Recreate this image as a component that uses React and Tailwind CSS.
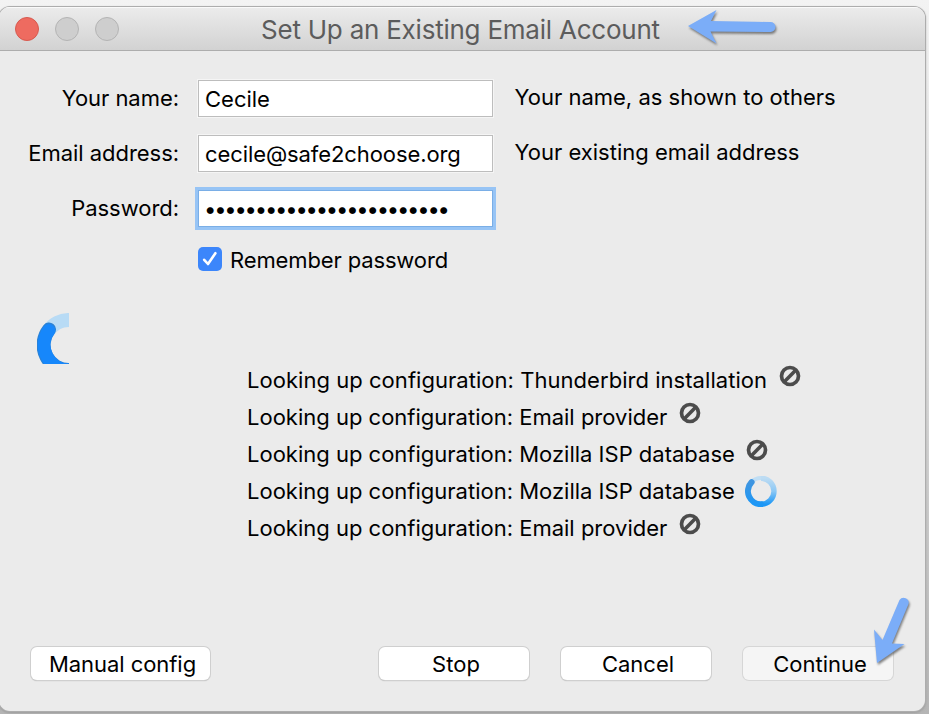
import React from "react";

function Blocked() {
  return (
    <svg width="22" height="22" viewBox="0 0 22 22" className="shrink-0 fill-none stroke-[#4c4c4c]">
      <circle cx="11" cy="11" r="8.5" strokeWidth="3.7" />
      <path d="M5.6 16.4 16.4 5.6" strokeWidth="3.6" />
    </svg>
  );
}

function SmallSpinner() {
  return (
    <svg width="32" height="31" viewBox="0 0 32 31" className="shrink-0 fill-none">
      <defs>
        <linearGradient id="leftArc" x1="0" y1="0" x2="0" y2="1">
          <stop offset="0" stopColor="#3f95e0" />
          <stop offset="1" stopColor="#1c97f6" />
        </linearGradient>
        <linearGradient id="rightArc" x1="0" y1="0" x2="0" y2="1">
          <stop offset="0" stopColor="#bddcf3" />
          <stop offset="0.5" stopColor="#8cc8f5" />
          <stop offset="1" stopColor="#1c97f6" />
        </linearGradient>
      </defs>
      <path d="M6.5 6 A13.2 13.2 0 0 1 16 2" stroke="#c0def4" strokeWidth="4" />
      <path d="M16 2.200 A13 13 0 0 1 16 28.200" stroke="url(#rightArc)" strokeWidth="5.4" />
      <path d="M6.6 6.2 A13 13 0 0 0 16.2 28.2" stroke="url(#leftArc)" strokeWidth="6" strokeLinecap="round" />
    </svg>
  );
}

function Lookup({ source, busy, className }) {
  return (
    <div className="flex h-[37px] items-center">
      <span className={"whitespace-nowrap " + className}>Looking up configuration: {source}</span>
      {busy ? <div className="mt-[2px]"><SmallSpinner /></div> : <div className="ml-[2px] -mt-[8px]"><Blocked /></div>}
    </div>
  );
}

const label = "self-center pb-[2px] text-right tracking-[-0.04px]";
const hint = "self-center pb-[4px] pl-[2.5px]";
const field = "flex h-[37px] w-[295px] items-center border border-[#bdbdbd] bg-white pl-[6px] shadow-[0_0_0_1px_#f5f5f5]";
const button = "flex h-[33px] items-center justify-center rounded-[6px] bg-white pt-px pl-[4px] shadow-[0_0_0_1px_#cfcfcf,0_1px_1px_0_#a5a5a5]";

export default function App() {
  return (
    <div className="relative h-[714px] w-[929px] overflow-hidden bg-gradient-to-b from-[#f3f3f3] via-[#dadada] to-[#b5b5b5] pt-[7px] font-['Inter',sans-serif] text-[22px] leading-none text-black">
      <div className="-ml-px flex h-[704px] w-[926px] flex-col overflow-hidden rounded-[11px] bg-[#ebebeb] shadow-[0_0_0_1px_#adadad,0_1px_2px_1px_#8888]">
        <header className="flex h-[44px] shrink-0 items-center border-b border-[#adadad] bg-gradient-to-b from-[#ececec] to-[#d2d2d2] pl-[16px] shadow-[inset_0_1px_0_#fafafa]">
          <div className="flex gap-4">
            <span className="size-6 rounded-full border border-[#d75a4f] bg-[#ee6b60]" />
            <span className="size-6 rounded-full border border-[#b4b4b4] bg-[#cecece]" />
            <span className="size-6 rounded-full border border-[#b4b4b4] bg-[#cecece]" />
          </div>
          <h1 className="ml-[142px] mt-[3px] whitespace-nowrap text-[26px] tracking-[-0.23px] text-[#5c5c5c]">Set Up an Existing Email Account</h1>
        </header>

        <section className="ml-px mt-[29px] grid grid-cols-[179px_295px_1fr] gap-x-[19px] gap-y-[18px]">
          <label className={label}>Your name:</label>
          <div className={field}>Cecile</div>
          <span className={hint}>Your name, as shown to others</span>
          <label className={label}>Email address:</label>
          <div className={field + " tracking-[-0.09px]"}>cecile@safe2choose.org</div>
          <span className={hint}>Your existing email address</span>
          <label className={label}>Password:</label>
          <div className="flex h-[37px] w-[295px] items-center border border-[#7aaee6] bg-white pl-[5px] shadow-[0_0_0_3px_#97c4f5]">
            <span className="tracking-[-2.22px]">••••••••••••••••••••••••</span>
          </div>
        </section>

        <label className="ml-[199px] mt-5 flex h-6 items-center">
          <span className="flex size-6 items-center justify-center rounded-[5px] bg-[#3c86fb]">
            <svg width="24" height="24" viewBox="0 0 24 24" className="fill-none stroke-white"><path d="M6.2 12.8 10 17 17.4 6.2" strokeWidth="2.6" strokeLinecap="round" strokeLinejoin="round" /></svg>
          </span>
          <span className="ml-2 mt-px tracking-[-0.13px]">Remember password</span>
        </label>

        <svg width="32" height="51" viewBox="0 0 32 51" className="ml-[38px] mt-[42px] shrink-0 fill-none">
          <path d="M11 18.500 A25 25 0 0 1 33 7" stroke="#b8dbf5" strokeWidth="14" />
          <path d="M12 16.5 A25 25 0 0 0 33 57" stroke="#2b82d5" strokeWidth="14" strokeLinecap="round" />
          <path d="M11.800 17.5 A25 25 0 0 0 33 57" stroke="#1687fb" strokeWidth="12.800" strokeLinecap="round" />
        </svg>

        <div className="-mt-[3px] ml-[248px] flex flex-col">
          <Lookup source="Thunderbird installation" className="w-[530px] tracking-[0.04px]" />
          <Lookup source="Email provider" className="w-[430px]" />
          <Lookup source="Mozilla ISP database" className="w-[497px]" />
          <Lookup source="Mozilla ISP database" busy className="w-[498px]" />
          <Lookup source="Email provider" className="w-[430px]" />
        </div>

        <footer className="ml-[32px] mt-[101px] flex">
          <div className={button + " w-[179px] tracking-[-0.05px]"}>Manual config</div>
          <div className={button + " ml-[169px] w-[150px]"}>Stop</div>
          <div className={button + " ml-[32px] w-[150px]"}>Cancel</div>
          <div className="ml-[32px] flex h-[33px] w-[150px] items-center justify-center rounded-[6px] bg-[#f5f5f5] pl-[4px] pt-px shadow-[0_0_0_1px_#d6d6d6]">Continue</div>
        </footer>
      </div>

      <svg width="929" height="714" className="pointer-events-none absolute left-0 top-0 fill-[#7badf8] drop-shadow-[1px_2px_1px_#555b]">
        <path d="M688 26 716.500 10 711 21 770.500 22 A5 5 0 0 1 770.500 32 L710.500 31.5 716.500 43.5Z" />
        <path d="M877 663 874 629.500 882.500 640 899.500 600 A5 5 0 0 1 908.500 604 L892 643.500 904.500 644Z" />
      </svg>
    </div>
  );
}
